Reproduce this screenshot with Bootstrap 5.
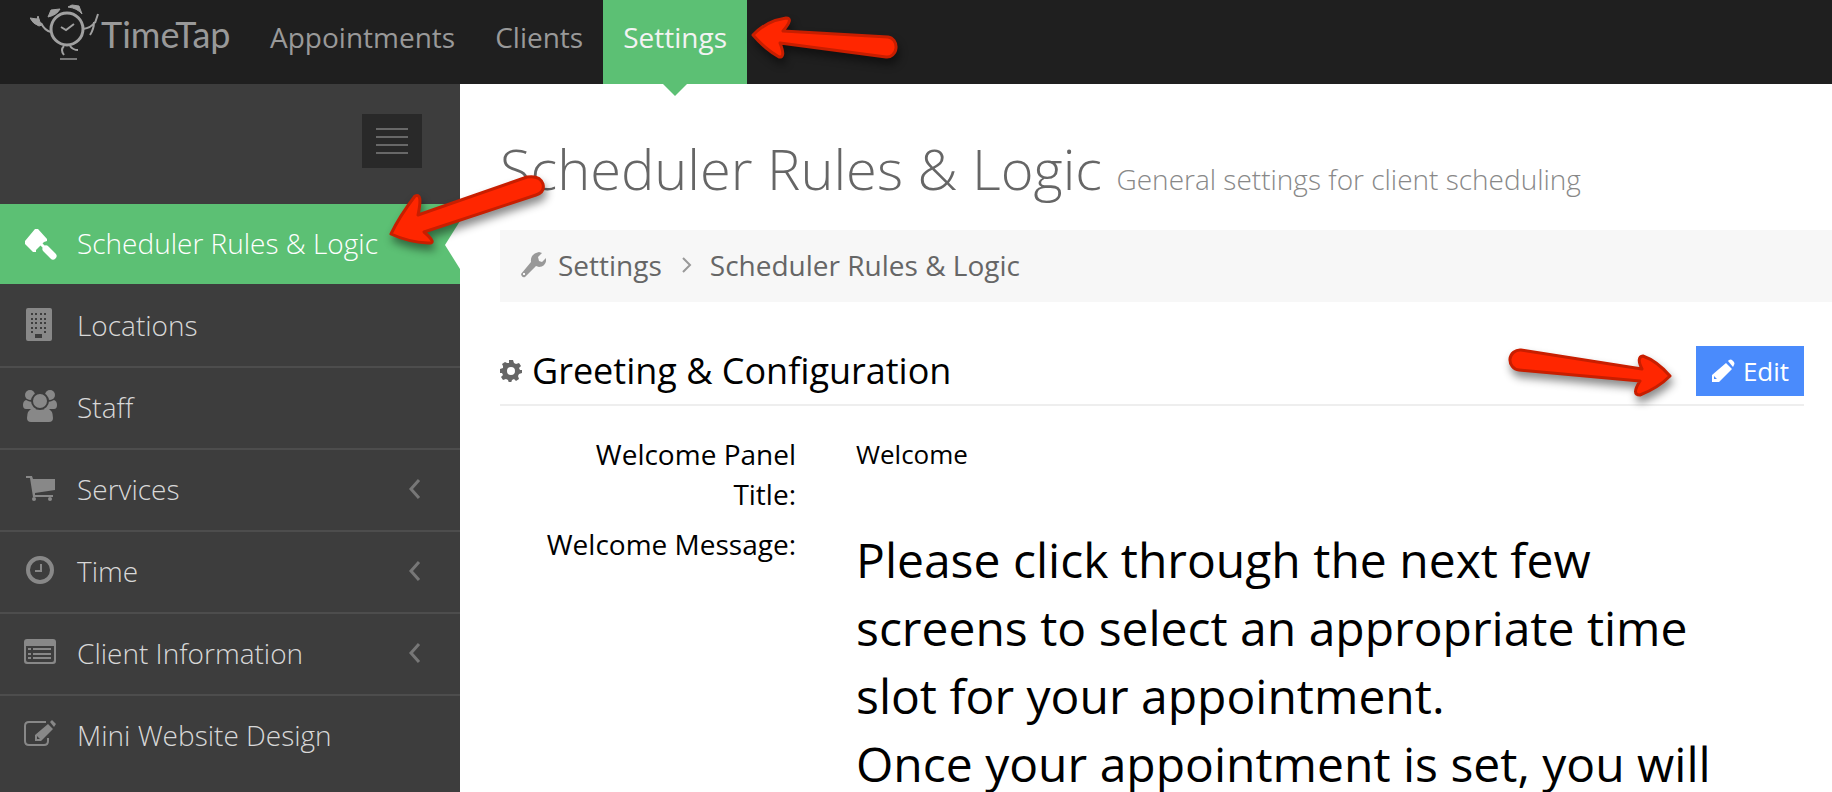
<!DOCTYPE html>
<html lang="en">
<head>
<meta charset="utf-8">
<meta name="viewport" content="width=device-width, initial-scale=1">
<title>TimeTap – Scheduler Rules &amp; Logic</title>
<link rel="stylesheet" href="https://cdn.jsdelivr.net/npm/bootstrap@5.3.0/dist/css/bootstrap.min.css">
<style>
  body { font-family: "Open Sans", sans-serif; font-size: 28px; line-height: 40px; color: #000; background: #3d3d3d; overflow-x: hidden; }
  a { text-decoration: none; }

  .topbar { background: #1f1f1f; height: 84px; padding: 0 0 0 30px; z-index: 2; }
  .brand-logo { width: 202px; height: 64px; margin-right: 18px; }
  .brand-logo text { font-family: Lato, sans-serif; font-weight: 400; font-size: 36px; fill: #999; }
  .topbar .nav-link { color: #999; height: 84px; padding: 17px 20px 0; line-height: 40px; }
  .topbar .nav-link.active { background: #5cc074; color: #f3f3f3; }
  .topbar .nav-link.active::after { content: ""; position: absolute; left: 50%; top: 100%; margin-left: -12px; border: 12px solid transparent; border-top-color: #5cc074; border-bottom: 0; }

  .sidebar { width: 460px; background: #3d3d3d; }
  .side-toggle { width: 60px; height: 54px; background: #292929; border: 0; margin: 30px 38px 36px auto; }
  .side-link { color: #d8d8d8; font-weight: 300; height: 82px; padding: 0 38px 2px 22px; border-top: 2px solid #4d4d4d; }
  .side-link.active { color: #fff; background: #5cc074; border: 0; height: 80px; }
  .side-link.active::after { content: ""; position: absolute; right: 0; top: 17px; border: 24px solid transparent; border-right: 15px solid #fff; border-left: 0; }
  .side-link.active + .side-link { border-color: transparent; }
  .side-icon { width: 36px; height: 36px; margin-right: 19px; fill: #888; }
  .active .side-icon { fill: #fff; }

  .main-pane { background: #fff; min-height: calc(100vh - 84px); padding: 44px 0 0 40px; min-width: 0; }
  .page-title { font-weight: 300; font-size: 56px; line-height: 80px; color: #666; margin: 0 0 22px; }
  .page-title small { font-size: 28px; line-height: 1; color: #888; }
  .crumbs { background: #f7f7f7; height: 72px; padding: 0 20px 2px; color: #666; }
  .crumbs a { color: #666; }
  .crumb-icon { margin-right: 12px; }
  .crumb-sep { margin: 0 17px; }
  .panel-head { border-bottom: 2px solid #eee; margin: 44px 28px 28px 0; padding-bottom: 8px; }
  .panel-head h2 { font-size: 36px; line-height: 50px; margin: 0; font-weight: 400; }
  .head-icon { margin-right: 10px; }
  .edit-btn { background: #4a8bfc; color: #fff; border: 0; border-radius: 0; width: 108px; height: 50px; font-size: 26px; line-height: 40px; }
  .set-row { margin-bottom: 10px; }
  .set-label { width: 296px; margin-right: 60px; text-align: right; flex: none; }
  .set-value { font-size: 26px; }
  .greeting { font-size: 48px; line-height: 68px; margin: 2px 100px 0 0; }

  .callout { position: absolute; pointer-events: none; overflow: visible; z-index: 5; filter: drop-shadow(2px 6px 4px rgba(0,0,0,.45)); fill: #ff2600; stroke: #c81e00; stroke-width: 3; stroke-linejoin: round; }
</style>
<script src="https://cdn.jsdelivr.net/npm/bootstrap@5.3.0/dist/js/bootstrap.bundle.min.js"></script>
</head>
<body>
<header class="topbar d-flex position-relative">
  <a href="#" aria-label="TimeTap home">
    <svg class="brand-logo" viewBox="0 0 202 64" fill="none" stroke="#a0a0a0" stroke-width="2">
      <circle cx="37" cy="29" r="16" stroke-width="3"/>
      <path d="M31 27l5 3 8-6M21 32q-6-1-10-9M53 29q8-1 12-7M65 23l3-9M64 22q0 7-4 13M34 46q-4 4 0 9M40 46q3 4 8 4"/>
      <path d="M30 59h17" stroke="#777"/>
      <path d="M0 18l7 1 1-3 2 6 2 3-3 1q-6-2-9-8zM18 17l3-7 9-1q-3 6-12 8zM38 7l4-2 7 1 3 8q-5-6-14-7z" fill="#a0a0a0" stroke-width="1"/>
      <text x="71" y="48" stroke="none">TimeTap</text>
    </svg>
  </a>
  <nav class="nav">
    <a class="nav-link" href="#">Appointments</a>
    <a class="nav-link" href="#">Clients</a>
    <a class="nav-link active position-relative" aria-current="page" href="#">Settings</a>
  </nav>
  <svg class="callout" style="left:752px;top:16px" width="150" height="44"><path d="M1 19Q14 5 34 2Q42 2 31 15L136 21A9 10 0 0 1 134 41L28 27Q34 42 27 41Q13 33 1 19Z"/></svg>
</header>

<div class="d-flex position-relative">
  <aside class="sidebar flex-shrink-0 d-flex flex-column">
    <button class="side-toggle d-block p-0" type="button" aria-label="Toggle menu">
      <svg width="32" height="30" stroke="#686868" stroke-width="2" class="d-block mx-auto"><path d="M0 3h32M0 11h32M0 19h32M0 27h32"/></svg>
    </button>
    <nav class="d-flex flex-column">
      <a class="side-link active position-relative d-flex align-items-center" href="#">
        <svg class="side-icon" viewBox="0 0 36 36"><path d="M3 16L13 4l3 0 9 10 0 2-3 1-8 8 0 2-3 0-8-8z"/><path d="M18 18l13 13" fill="none" stroke="#fff" stroke-width="3"/><path d="M24 24l7 7" fill="none" stroke="#fff" stroke-width="7" stroke-linecap="round"/></svg>Scheduler Rules &amp; Logic</a>
      <a class="side-link d-flex align-items-center" href="#">
        <svg class="side-icon" viewBox="0 0 36 36"><path fill-rule="evenodd" d="M6 1h22q2 0 2 2v29q0 2-2 2H6q-2 0-2-2V3q0-2 2-2zM9 6v2h2V6zm4 0v2h2V6zm5 0v2h2V6zm4 0v2h2V6zM9 11v2h2v-2zm4 0v2h2v-2zm5 0v2h2v-2zm4 0v2h2v-2zM9 15v2h2v-2zm4 0v2h2v-2zm5 0v2h2v-2zm4 0v2h2v-2zM9 20v2h2v-2zm4 0v2h2v-2zm5 0v2h2v-2zm4 0v2h2v-2zM9 24v2h2v-2zm13 0v2h2v-2zM13 27v4h7v-4z"/></svg>Locations</a>
      <a class="side-link d-flex align-items-center" href="#">
        <svg class="side-icon" viewBox="0 0 36 36"><circle cx="8" cy="6" r="5"/><circle cx="28" cy="6" r="5"/><path d="M4 11q5 3 7 1 0 5 4 8H4q-3 0-3-4 0-4 3-5zM32 11q-5 3-7 1 0 5-4 8h11q3 0 3-4 0-4-3-5z"/><circle cx="18" cy="12" r="8" stroke="#3d3d3d" stroke-width="2"/><path d="M11 19q7 4 14 0 6 2 6 10 0 4-4 4H9q-4 0-4-4 0-8 6-10z"/></svg>Staff</a>
      <a class="side-link d-flex align-items-center" href="#">
        <svg class="side-icon" viewBox="0 0 36 36"><path d="M4 5h6l1 3h22v11L13 22l0 2h18v2H11L8 7H4z"/><circle cx="12" cy="28" r="2"/><circle cx="28" cy="28" r="2"/></svg>Services
        <svg class="ms-auto" width="14" height="20" fill="none" stroke="#777" stroke-width="3"><path d="M11 1L3 10l8 9"/></svg></a>
      <a class="side-link d-flex align-items-center" href="#">
        <svg class="side-icon" viewBox="0 0 36 36"><circle cx="18" cy="17" r="12" fill="none" stroke="#888" stroke-width="4"/><path d="M19 11v7h-6" fill="none" stroke="#888" stroke-width="2"/></svg>Time
        <svg class="ms-auto" width="14" height="20" fill="none" stroke="#777" stroke-width="3"><path d="M11 1L3 10l8 9"/></svg></a>
      <a class="side-link d-flex align-items-center" href="#">
        <svg class="side-icon" viewBox="0 0 36 36"><path fill-rule="evenodd" d="M5 4h26q3 0 3 3v19q0 3-3 3H5q-3 0-3-3V7q0-3 3-3zM4 11v14q0 2 2 2h24q2 0 2-2V11z"/><path d="M6 13h3v2H6zM11 13h18v2H11zM6 18h3v2H6zM11 18h18v2H11zM6 22h3v2H6zM11 22h18v2H11z"/></svg>Client Information
        <svg class="ms-auto" width="14" height="20" fill="none" stroke="#777" stroke-width="3"><path d="M11 1L3 10l8 9"/></svg></a>
      <a class="side-link d-flex align-items-center" href="#">
        <svg class="side-icon" viewBox="0 0 36 36"><path d="M24 5H7Q3 5 3 9v15q0 4 4 4h15q4 0 4-4v-3" fill="none" stroke="#888" stroke-width="2"/><path fill-rule="evenodd" d="M26 7l5 5-12 12h-6v-6zM15 19l0 3 3 0zM28 5l2-2 4 4-2 3z"/></svg>Mini Website Design</a>
    </nav>
  </aside>

  <main class="main-pane flex-grow-1">
    <h1 class="page-title">Scheduler Rules &amp; Logic <small>General settings for client scheduling</small></h1>
    <nav class="crumbs d-flex align-items-center" aria-label="Breadcrumb">
      <svg width="26" height="28" class="crumb-icon" viewBox="0 0 26 28"><path fill="#999" fill-rule="evenodd" d="M11 11Q10 3 19 1l3 1-4 4 1 4 3 1 4-4q1 8-7 9l-3-1L5 26q-3 1-4-3zM3 22v2h2v-2z"/></svg>
      <a href="#">Settings</a>
      <svg width="14" height="18" class="crumb-sep" fill="none" stroke="#999" stroke-width="2"><path d="M4 2l7 7-7 7"/></svg>
      <a href="#">Scheduler Rules &amp; Logic</a>
    </nav>
    <section>
      <div class="panel-head d-flex align-items-center">
        <svg width="22" height="22" class="head-icon" viewBox="0 0 22 22"><path fill="#666" fill-rule="evenodd" d="M9 0h4l1 3 2 1 3-1 2 3-2 2 1 2 2 0v3l-3 1-1 2 1 3-3 2-2-2-2 1-1 3H9l-1-3-2-1-3 1-2-3 2-2-1-2-2 0V9l3-1 0-2-1-2 3-2 2 1 2 0zM11 7a4 4 0 1 0 0 8 4 4 0 0 0 0-8z"/></svg>
        <h2>Greeting &amp; Configuration</h2>
        <button type="button" class="btn edit-btn ms-auto p-0 d-flex align-items-center justify-content-center gap-2">
          <svg width="24" height="24" viewBox="0 0 24 24"><path fill="#fff" fill-rule="evenodd" d="M15 4l6 6L8 23H1v-7zM3 17v3h3zM17 2l1-1q2-1 3 0l2 2q1 2 0 3l-1 2z"/></svg>Edit</button>
      </div>
      <div class="d-flex set-row">
        <div class="set-label">Welcome Panel<br>Title:</div>
        <div class="set-value">Welcome</div>
      </div>
      <div class="d-flex">
        <div class="set-label">Welcome Message:</div>
        <p class="greeting">Please click through the next few screens to select an appropriate time slot for your appointment.<br>Once your appointment is set, you will</p>
      </div>
    </section>
  </main>
  <svg class="callout" style="left:390px;top:92px" width="160" height="70"><path d="M1 58Q9 41 25 20Q33 16 28 39L137 1Q150 -1 153 8Q155 16 146 19L34 56Q48 68 38 67Q18 66 1 58Z"/></svg>
  <svg class="callout" style="left:1509px;top:263px" width="165" height="48"><path d="M12 3L133 22Q127 10 134 9Q148 14 161 29Q149 41 131 48Q122 48 131 34L10 23A10 10 0 0 1 12 3Z"/></svg>
</div>
</body>
</html>
